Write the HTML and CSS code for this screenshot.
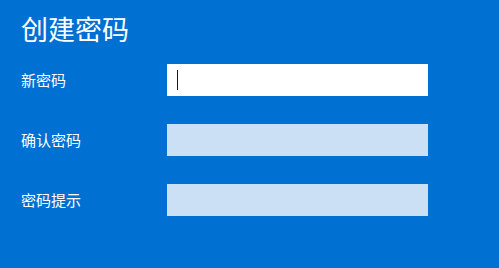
FILE: index.html
```html
<!DOCTYPE html>
<html lang="zh-CN">
<head>
<meta charset="utf-8">
<title>创建密码</title>
<link rel="stylesheet" href="styles.css">
</head>
<body>
<div class="page">
  <h1 class="title">创建密码</h1>
  <div class="form">
    <label class="label">新密码</label>
    <div class="field field-active"><span class="caret"></span></div>
    <label class="label">确认密码</label>
    <div class="field"></div>
    <label class="label">密码提示</label>
    <div class="field"></div>
  </div>
</div>
</body>
</html>
```
FILE: styles.css
```css
html, body {
  margin: 0;
  padding: 0;
  background: #0070d3;
  width: 499px;
  height: 268px;
  overflow: hidden;
}
.page {
  padding: 12px 0 0 21px;
  font-family: "Noto Sans CJK SC", "Noto Sans", sans-serif;
  color: #ffffff;
}
.title {
  margin: 0;
  font-size: 27px;
  font-weight: 400;
  line-height: 34px;
  height: 34px;
}
.form {
  margin-top: 18px;
  display: grid;
  grid-template-columns: 146px 261px;
  grid-auto-rows: 32px;
  row-gap: 28px;
  align-items: center;
}
.label {
  font-size: 15px;
  line-height: 20px;
}
.field {
  height: 32px;
  background: #cbe0f5;
  position: relative;
}
.field-active {
  background: #ffffff;
}
.caret {
  position: absolute;
  left: 10px;
  top: 6px;
  width: 1px;
  height: 20px;
  background: #1a1a1a;
}
```
